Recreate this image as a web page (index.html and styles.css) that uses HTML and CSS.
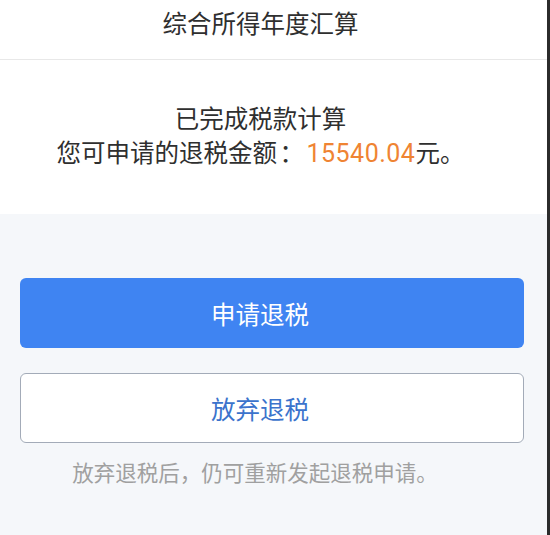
FILE: index.html
```html
<!DOCTYPE html>
<html lang="zh-CN">
<head>
<meta charset="utf-8">
<title>综合所得年度汇算</title>
<link rel="stylesheet" href="styles.css">
</head>
<body>
<div class="page">
  <header class="header">综合所得年度汇算</header>
  <section class="result">
    <p class="line">已完成税款计算</p>
    <p class="line">您可申请的退税金额<span class="colon">：</span><span class="amount">15540.04</span>元。</p>
  </section>
  <section class="actions">
    <button class="btn btn-primary" type="button">申请退税</button>
    <button class="btn btn-outline" type="button">放弃退税</button>
    <p class="note">放弃退税后，仍可重新发起退税申请。</p>
  </section>
</div>
</body>
</html>
```

FILE: styles.css
```css
html, body {
  margin: 0;
  padding: 0;
}
body {
  width: 550px;
  height: 535px;
  overflow: hidden;
  font-family: "Noto Sans CJK SC", "Noto Sans", sans-serif;
  color: #333333;
  background: #2b2b2b;
  text-spacing-trim: space-all;
}
.page {
  width: 547px;
  height: 535px;
  background: #f5f7fa;
  display: flex;
  flex-direction: column;
}
.header {
  background: #ffffff;
  padding: 6px 26px 19px 0;
  line-height: 34px;
  font-size: 24.5px;
  text-align: center;
  color: #2f2f2f;
  border-bottom: 1px solid #e8e8e8;
}
.result {
  background: #ffffff;
  padding: 41px 26px 43px 0;
  text-align: center;
}
.line {
  margin: 0;
  font-size: 24.5px;
  line-height: 34px;
  color: #2f2f2f;
}
.colon {
  display: inline-block;
  width: 1.2em;
  text-align: center;
}
.amount {
  font-family: "Roboto", "Noto Sans CJK SC", sans-serif;
  font-size: 25px;
  letter-spacing: 0.5px;
  color: #ef8433;
}
.actions {
  padding: 64px 23px 0 20px;
  display: flex;
  flex-direction: column;
}
.btn {
  height: 70px;
  border-radius: 6px;
  font-family: "Noto Sans CJK SC", sans-serif;
  font-size: 24.5px;
  padding: 0 24px 0 0;
  cursor: pointer;
}
.btn-primary {
  background: #3f84f2;
  color: #ffffff;
  border: none;
}
.btn-outline {
  margin-top: 25px;
  background: #ffffff;
  color: #3b73cc;
  border: 1px solid #a3abb8;
}
.note {
  margin: 14px 0 0;
  padding-right: 34px;
  text-align: center;
  font-size: 21.5px;
  line-height: 30px;
  color: #a0a0a0;
}
```
